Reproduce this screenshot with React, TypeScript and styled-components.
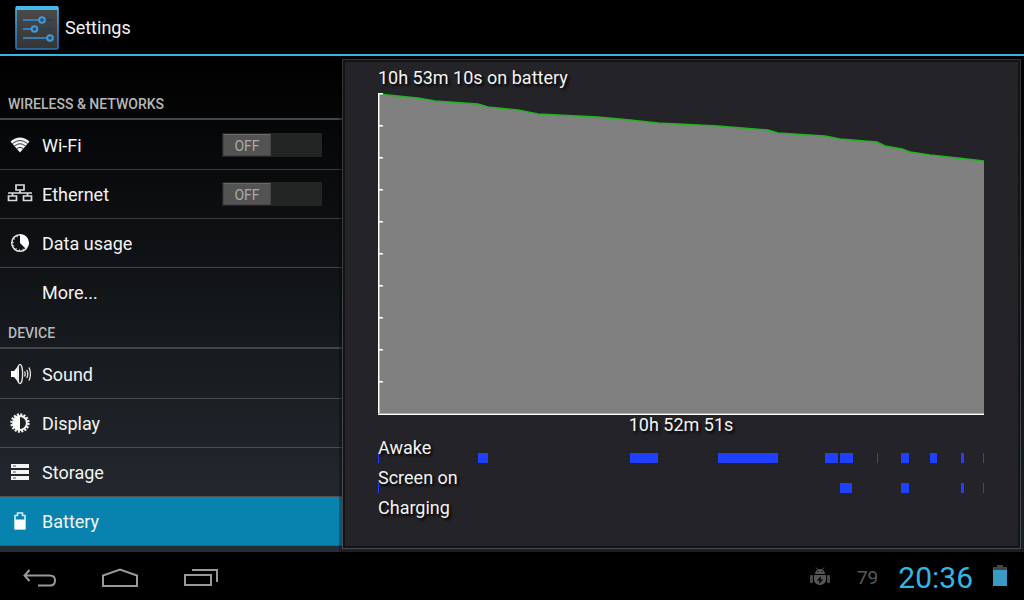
import React from "react";
import styled, { createGlobalStyle } from "styled-components";

const GlobalStyle = createGlobalStyle`
  * { box-sizing: border-box; }
  body {
    margin: 0;
    background: #000;
    color: #f3f3f3;
    font-family: Roboto, "Noto Sans", sans-serif;
    font-size: 18px;
    line-height: 24px;
  }
`;

const Screen = styled.div`
  min-height: 100vh;
  display: flex;
  flex-direction: column;
`;

const ActionBar = styled.header`
  height: 56px;
  display: flex;
  align-items: center;
  gap: 6px;
  padding: 2px 0 0 15px;
  background: #000;
  border-bottom: 2px solid #33b5e5;
`;

const Title = styled.h1`
  margin: 0;
  font-size: 18px;
  font-weight: 400;
  line-height: 24px;
`;

const Content = styled.div`
  flex: 1;
  display: flex;
  background: linear-gradient(#000, #272d34);
`;

const Sidebar = styled.nav`
  flex: 0 0 342px;
  padding-top: 32px;
`;

const SectionTitle = styled.h2`
  height: 32px;
  margin: 0;
  padding: 4px 8px 0;
  border-bottom: 2px solid #454648;
  color: #b8b8b8;
  font-size: 14px;
  font-weight: 500;
  line-height: 24px;
`;

const List = styled.ul`
  margin: 0;
  padding: 1px 0 0;
  list-style: none;
`;

const Row = styled.li<{ $active?: boolean; $plain?: boolean }>`
  height: 49px;
  display: flex;
  align-items: center;
  padding-right: 20px;
  border-bottom: 1px solid ${(p) => (p.$plain ? "transparent" : "rgba(255, 255, 255, 0.2)")};
  background: ${(p) => (p.$active ? "#0882ae" : "transparent")};
  background-clip: padding-box;
`;

const RowLink = styled.a`
  flex: 1;
  display: grid;
  grid-template-columns: 40px 1fr;
  column-gap: 2px;
  align-items: center;
  color: inherit;
  text-decoration: none;
`;

const IconSlot = styled.span`
  display: flex;
  justify-content: center;
`;

const RowLabel = styled.span`
  padding: 13px 0 11px;
`;

const Switch = styled.label`
  position: relative;
  width: 100px;
  height: 24px;
  display: flex;
  padding: 1px;
  background: #232424;

  input {
    position: absolute;
    inset: 0;
    width: 100%;
    height: 100%;
    margin: 0;
    opacity: 0;
  }
`;

const Thumb = styled.span`
  width: 48px;
  height: 22px;
  border: 1px solid #454545;
  border-top-color: #6b6b6b;
  border-radius: 1px;
  background: #535353;
  color: #aaa;
  font-size: 14px;
  line-height: 22px;
  text-align: center;

  input:checked ~ & {
    margin-left: auto;
    background: #0882ae;
  }
`;

const Panel = styled.main`
  flex: 1;
  min-width: 0;
  margin: 3px 3px 3px 0;
  padding: 2px;
  border: 1px solid rgba(255, 255, 255, 0.2);
  background: #131417;
  background-clip: padding-box;
  box-shadow: 0 0 0 3px rgba(0, 0, 0, 0.3);
`;

const PanelBody = styled.div`
  height: 100%;
  padding: 4px 34px 20px 33px;
  background: #242328;
  text-shadow: 2px 2px 3px #000;
`;

const Summary = styled.p`
  margin: 0 0 3px;
`;

const Chart = styled.svg`
  display: block;
  width: 100%;
  height: 322px;
`;

const Duration = styled.p`
  height: 18px;
  margin: 0;
  line-height: 20px;
  text-align: center;
`;

const Timeline = styled.div`
  display: grid;
  height: 30px;

  > * {
    grid-area: 1 / 1;
  }
`;

const TimelineLabel = styled.span`
  line-height: 30px;
`;

const TimelineBars = styled.svg`
  align-self: end;
  width: 100%;
  height: 10px;
`;

const SystemBar = styled.footer`
  height: 48px;
  display: flex;
  align-items: center;
  justify-content: space-between;
  padding: 0 17px 0 0;
  background: #000;
`;

const Cluster = styled.div`
  display: flex;
  align-items: center;
`;

const NavButton = styled.button`
  width: 80px;
  height: 48px;
  display: flex;
  align-items: center;
  justify-content: center;
  padding: 3px 0 0;
  border: 0;
  background: none;
  color: #999;
`;

const Status = styled.span`
  margin: 4px 20px 0 27px;
  color: #5a5a5a;
  font-size: 19px;
`;

const Clock = styled.time`
  margin: 4px 20px 0 0;
  color: #33b5e5;
  font-size: 30px;
  line-height: 40px;
`;

const icons = {
  wifi: (
    <svg width="20" height="16" viewBox="0 0 20 16">
      <path d="M.5 4.5Q10-3.500 19.500 4.500L10 15.500Z" fill="#f3f3f3" />
      <path d="M2.500 6.500Q10 .5 17.500 6.500M4.500 9Q10 4.500 15.500 9M6.800 11.500Q10 9 13.200 11.500" fill="none" stroke="#3a3b3c" strokeWidth="1" />
    </svg>
  ),
  ethernet: (
    <svg width="26" height="20" viewBox="0 0 26 20" fill="none" stroke="#dcdcdc" strokeWidth="1.700">
      <path d="M9 1h8v5H9zM1.500 12h8v4.500h-8zM16.500 12h8v4.500h-8zM13 6v3M1 9h24M5.500 9v3M20.500 9v3" />
    </svg>
  ),
  data: (
    <svg width="20" height="20" viewBox="0 0 20 20">
      <circle cx="10" cy="10" r="8.300" fill="none" stroke="#e8e8e8" strokeWidth="1.500" />
      <circle cx="10" cy="10" r="7" fill="none" stroke="#e8e8e8" strokeWidth="1.400" strokeDasharray="1 2.660" />
      <path d="M10 1.500v8.500l6 6A8.500 8.500 0 0 0 10 1.500z" fill="#fff" />
    </svg>
  ),
  sound: (
    <svg width="22" height="22" viewBox="0 0 22 22" fill="none" stroke="#e0e0e0">
      <path d="M2 8h3l5-6v18L5 14H2z" fill="#fff" stroke="none" />
      <ellipse cx="11" cy="11" rx="2.600" ry="9.600" strokeWidth="1.300" />
      <path d="M15.500 8.500q1.500 2.500 0 5M17.800 7q2 4 0 8M20 4.500q3 6.500 0 13" strokeWidth="1.300" />
    </svg>
  ),
  display: (
    <svg width="20" height="20" viewBox="0 0 20 20">
      <circle cx="10" cy="10" r="8.500" fill="none" stroke="#f3f3f3" strokeWidth="2.400" strokeDasharray="2 1.338" />
      <circle cx="10" cy="10" r="6.900" fill="none" stroke="#f3f3f3" strokeWidth="2" />
      <path d="M10 3a7 7 0 0 0 0 14z" fill="#fff" />
    </svg>
  ),
  storage: (
    <svg width="18" height="16" viewBox="0 0 18 16">
      <path d="M0 0h18v4H0zM0 6h18v4H0zM0 12h18v4H0z" fill="#f3f3f3" />
      <path d="M2 2h3M2 8h3M2 14h3" stroke="#555" />
    </svg>
  ),
  battery: (
    <svg width="12" height="18" viewBox="0 0 12 18">
      <path d="M1 17V3.500h2.500V1h5v2.500H11V17z" fill="none" stroke="#d8ebf2" strokeWidth="1.600" />
      <path d="M1 7.500h10V17H1z" fill="#fff" />
    </svg>
  ),
};

type Item = { label: string; icon?: keyof typeof icons; toggle?: boolean; active?: boolean };

const sections: { title: string; items: Item[] }[] = [
  {
    title: "WIRELESS & NETWORKS",
    items: [
      { label: "Wi-Fi", icon: "wifi", toggle: true },
      { label: "Ethernet", icon: "ethernet", toggle: true },
      { label: "Data usage", icon: "data" },
      { label: "More..." },
    ],
  },
  {
    title: "DEVICE",
    items: [
      { label: "Sound", icon: "sound" },
      { label: "Display", icon: "display" },
      { label: "Storage", icon: "storage" },
      { label: "Battery", icon: "battery", active: true },
    ],
  },
];

// Each bar is [start, width] along a 606-unit time axis.
const timelines: { label: string; bars: [number, number][] }[] = [
  {
    label: "Awake",
    bars: [[0, 1], [100, 10], [252, 28], [340, 60], [447, 13], [462, 13], [499, 1], [523, 8], [552, 7], [583, 3], [605, 1]],
  },
  { label: "Screen on", bars: [[0, 1], [462, 12], [523, 8], [583, 3], [605, 1]] },
  { label: "Charging", bars: [] },
];

const level =
  "0,1 40,5 57,8 100,11 110,14 140,17 160,21 220,24 252,27 280,30 340,33 390,37 400,40 447,43 462,46 499,49 507,53 524,56 532,59 552,62 580,65 606,68";

const SettingsLogo = () => (
  <svg width="44" height="44" viewBox="0 0 44 44" aria-hidden="true">
    <defs>
      <linearGradient id="plate" x2="0" y2="1">
        <stop offset="0" stopColor="#4b4b4b" />
        <stop offset="1" stopColor="#353535" />
      </linearGradient>
      <linearGradient id="rim" x2="0" y2="1">
        <stop offset="0" stopColor="#4fc0f0" />
        <stop offset="1" stopColor="#2c6fc0" />
      </linearGradient>
    </defs>
    <rect x="1" y="1" width="42" height="42" rx="1" fill="url(#plate)" stroke="url(#rim)" strokeWidth="1.500" />
    <path d="M1 0h42v4H1z" fill="#45b8ec" />
    <path d="M8 14h30M8 23h30M8 32h30" stroke="#20415f" strokeWidth="1.500" />
    <path d="M8 14h16M8 23h9M8 32h24" stroke="#3d93d6" strokeWidth="1.500" />
    <g fill="#3a4650" stroke="#3d9ade" strokeWidth="2">
      <circle cx="27" cy="14" r="2.800" />
      <circle cx="19.500" cy="23" r="2.800" />
      <circle cx="35" cy="32" r="2.800" />
    </g>
  </svg>
);

export default function App() {
  return (
    <Screen>
      <GlobalStyle />
      <ActionBar>
        <SettingsLogo />
        <Title>Settings</Title>
      </ActionBar>

      <Content>
        <Sidebar aria-label="Settings">
          {sections.map((section) => (
            <section key={section.title}>
              <SectionTitle>{section.title}</SectionTitle>
              <List>
                {section.items.map((item) => (
                  <Row key={item.label} $active={item.active} $plain={!item.icon}>
                    <RowLink href="#" aria-current={item.active ? "page" : undefined}>
                      <IconSlot aria-hidden="true">{item.icon && icons[item.icon]}</IconSlot>
                      <RowLabel>{item.label}</RowLabel>
                    </RowLink>
                    {item.toggle && (
                      <Switch>
                        <input type="checkbox" role="switch" aria-label={item.label} />
                        <Thumb>OFF</Thumb>
                      </Switch>
                    )}
                  </Row>
                ))}
              </List>
            </section>
          ))}
        </Sidebar>

        <Panel>
          <PanelBody>
            <Summary>10h 53m 10s on battery</Summary>
            <Chart viewBox="0 0 606 322" preserveAspectRatio="none" role="img" aria-label="Battery level over time">
              <polygon points={`0,322 ${level} 606,322`} fill="#808080" />
              <polyline points={level} fill="none" stroke="#22b422" strokeWidth="1.500" />
              <path d="M1.500 0V322" stroke="#bdbdbd" />
              <path d="M.5 0V322" stroke="#fff" />
              {Array.from({ length: 10 }, (_, i) => (
                <path key={i} d={`M0 ${i * 32 + 0.75}h5`} stroke="#fff" strokeWidth="1.500" />
              ))}
              <path d="M0 321.500H606" stroke="#fff" />
              <path d="M0 320.500H606" stroke="#b0b0b0" />
            </Chart>
            <Duration>10h 52m 51s</Duration>
            {timelines.map((line) => (
              <Timeline key={line.label}>
                <TimelineBars viewBox="0 0 606 10" preserveAspectRatio="none" aria-hidden="true">
                  {line.bars.map(([x, w]) => (
                    <rect key={x} x={x} width={w} height="10" fill="#2040ff" />
                  ))}
                </TimelineBars>
                <TimelineLabel>{line.label}</TimelineLabel>
              </Timeline>
            ))}
          </PanelBody>
        </Panel>
      </Content>

      <SystemBar>
        <Cluster>
          <NavButton type="button" aria-label="Back">
            <svg width="34" height="18" viewBox="0 0 34 18" fill="none" stroke="currentColor" strokeWidth="2">
              <path d="M6.500 1L1.500 6.500L6.500 12M2 6.500H27C30.500 6.500 32 8.500 32 11.500S30.500 16.500 27 16.500H15" />
            </svg>
          </NavButton>
          <NavButton type="button" aria-label="Home">
            <svg width="38" height="20" viewBox="0 0 38 20" fill="none" stroke="currentColor" strokeWidth="2">
              <path d="M2 18V7.500L19 1.500L36 7.500V18z" />
            </svg>
          </NavButton>
          <NavButton type="button" aria-label="Recent apps">
            <svg width="36" height="18" viewBox="0 0 36 18" fill="none" stroke="currentColor" strokeWidth="2">
              <path d="M3 6h26v10H3zM10 1h25v12" />
            </svg>
          </NavButton>
        </Cluster>
        <Cluster>
          <svg width="20" height="18" viewBox="0 0 20 18" aria-hidden="true">
            <path d="M5 7Q5.500 2 10 2T15 7zM4 8h12v6Q14 18 10 18T4 14z" fill="#555" />
            <rect x="0" y="8" width="3" height="8" rx="1" fill="#484848" />
            <rect x="17" y="8" width="3" height="8" rx="1" fill="#484848" />
            <path d="M6 .5l1.500 2M14 .5l-1.500 2" stroke="#555" />
            <path d="M11 9L7 13.500h2.500L9 17l4-4.500h-2.500z" fill="#000" />
            <path d="M7.500 4.500h1M11.500 4.500h1" stroke="#000" />
          </svg>
          <Status>79</Status>
          <Clock>20:36</Clock>
          <svg width="14" height="22" viewBox="0 0 14 22" aria-hidden="true">
            <path d="M4 0h6v2h4v3H0V2h4z" fill="#444" />
            <path d="M0 5h14v16H0z" fill="#3a9cc4" />
          </svg>
        </Cluster>
      </SystemBar>
    </Screen>
  );
}
